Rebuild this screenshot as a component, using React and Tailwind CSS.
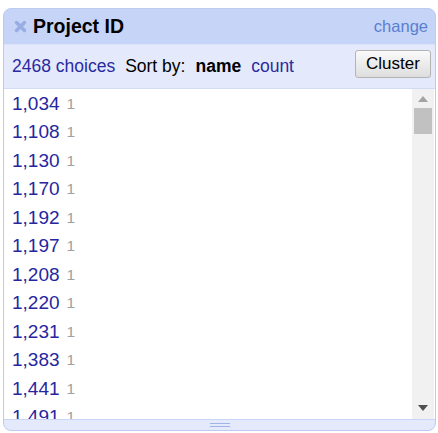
// Facet panel: title bar, sort header, scrollable list of choices.
const WERTE = ['1,034', '1,108', '1,130', '1,170', '1,192', '1,197', '1,208', '1,220', '1,231', '1,383', '1,441', '1,491']

function Kreuz() {
  return (
    <svg width="13" height="13" viewBox="0 0 13 13" className="shrink-0">
      <path d="M2.5 2.5 L10.5 10.5 M10.5 2.5 L2.5 10.5" stroke="#97ade4" strokeWidth="3.5" strokeLinecap="round" />
    </svg>
  )
}

export default function App() {
  return (
    <div className="h-[433px] w-[438px] bg-white pl-[3px] pr-[2px] pt-[8px]" style={{ fontFamily: 'Arial, "Liberation Sans", sans-serif' }}>
      <div className="flex h-[423px] flex-col overflow-hidden rounded-[8px] border border-[#bccbf2] bg-[#c6d4f7]">
        {/* Titel */}
        <div className="flex h-[35px] shrink-0 items-center gap-[6px] pl-[10px] pr-[7px]">
          <Kreuz />
          <span className="text-[19.5px] font-bold leading-none text-black">Project ID</span>
          <span className="ml-auto text-[16.5px] leading-none text-[#5a7fd0]">change</span>
        </div>

        {/* Sortierung */}
        <div className="flex h-[44px] shrink-0 items-center border-t border-[#dbe3fa] bg-[#e4eafb] pl-[8px] pr-[4px]">
          <span className="text-[17.5px] text-[#2a2aa0]">2468 choices</span>
          <span className="ml-[10px] text-[17.5px] text-black">Sort by:</span>
          <span className="ml-[10px] text-[17.5px] font-bold text-black">name</span>
          <span className="ml-[10px] text-[17.5px] text-[#2a2aa0]">count</span>
          <button className="ml-auto mb-[5px] h-[28px] w-[76px] rounded-[3px] border border-[#b4b4b4] bg-gradient-to-b from-[#fafafa] to-[#dedede] text-[17px] text-black">
            Cluster
          </button>
        </div>

        {/* Liste */}
        <div className="flex min-h-0 flex-1 border-t border-[#d0dbf6] bg-white">
          <div className="min-w-0 flex-1 overflow-hidden pl-[8px]">
            {WERTE.map((w) => (
              <div key={w} className="flex h-[28.5px] shrink-0 items-center">
                <span className="text-[19px] leading-none text-[#2626a0]">{w}</span>
                <span className="ml-[7px] text-[15.5px] leading-none text-[#a0a0a0]">1</span>
              </div>
            ))}
          </div>
          <div className="flex w-[22px] shrink-0 flex-col items-center bg-[#f1f1f1] pt-[7px] pb-[8px] mr-[1px]">
            <svg width="10" height="6" viewBox="0 0 10 6"><path d="M5 0 L10 6 L0 6 Z" fill="#a3a3a3" /></svg>
            <div className="mt-[6px] h-[26px] w-[18px] bg-[#c1c1c1]" />
            <div className="flex-1" />
            <svg width="10" height="6" viewBox="0 0 10 6"><path d="M0 0 L10 0 L5 6 Z" fill="#505050" /></svg>
          </div>
        </div>

        {/* Griff */}
        <div className="flex h-[11px] shrink-0 items-center justify-center border-t border-[#c7d5f7] bg-[#e4eafb]">
          <div className="flex flex-col gap-[2px]">
            <div className="h-[1px] w-[20px] bg-[#9fb3e6]" />
            <div className="h-[1px] w-[20px] bg-[#9fb3e6]" />
          </div>
        </div>
      </div>
    </div>
  )
}
